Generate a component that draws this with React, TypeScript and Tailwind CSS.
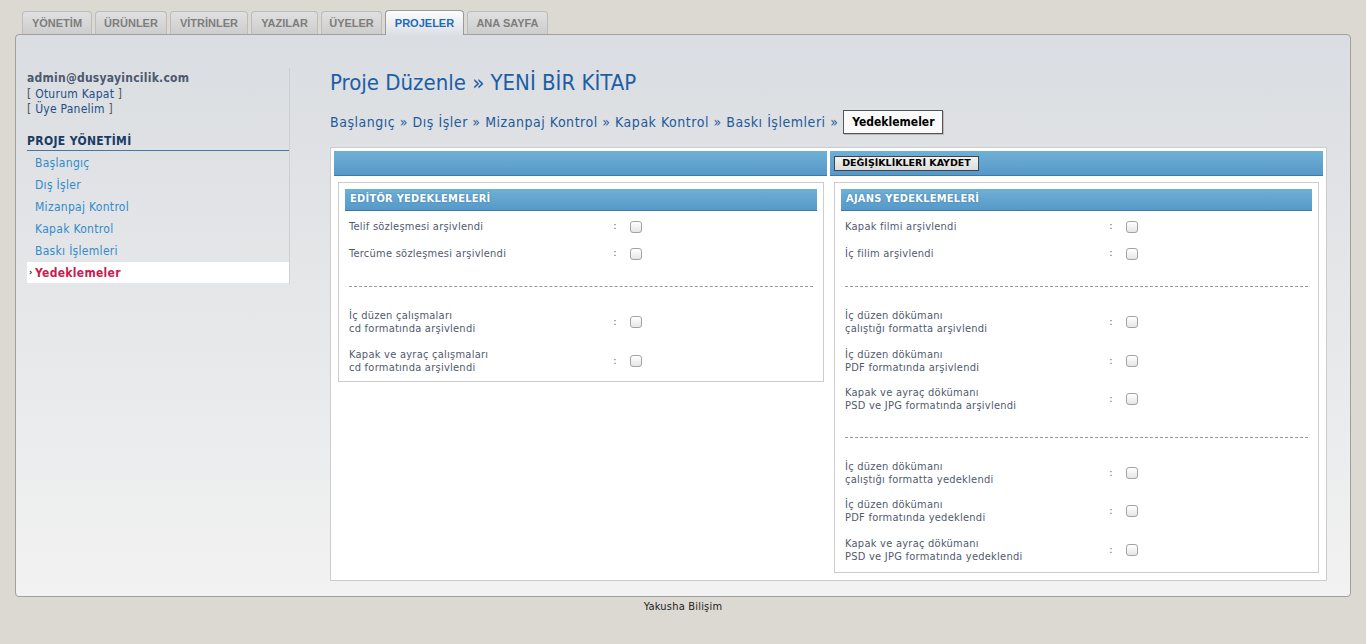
import React from "react";

const tabs = [
  { t: "YÖNETİM", w: "w-[70px]" },
  { t: "ÜRÜNLER", w: "w-[72px]" },
  { t: "VİTRİNLER", w: "w-[78px]" },
  { t: "YAZILAR", w: "w-[67px]" },
  { t: "ÜYELER", w: "w-[61px]" },
  { t: "PROJELER", w: "w-[79px]", active: true },
  { t: "ANA SAYFA", w: "w-[81px]" },
];

const menu = ["Başlangıç", "Dış İşler", "Mizanpaj Kontrol", "Kapak Kontrol", "Baskı İşlemleri"];

function Check() {
  return (
    <span className="inline-block w-[12px] h-[12px] rounded-[3px] border border-[#a3a3a3] bg-gradient-to-b from-white to-[#e6e6e6]" />
  );
}

function Row({ a, b }: { a: string; b?: string }) {
  return (
    <div className={`flex items-center ${b ? "h-[38.5px]" : "h-[27px]"}`}>
      <div className="w-[267px] pl-[4px] leading-[13px] tracking-[0.25px]">
        <div>{a}</div>
        {b && <div>{b}</div>}
      </div>
      <span className="w-[6px] text-center text-[#666]">:</span>
      <span className="ml-[12px] flex"><Check /></span>
    </div>
  );
}

function Dash({ top }: { top: string }) {
  return (
    <div className={`${top} pb-[16px] px-[4px]`}>
      <div className="border-t border-dashed border-[#9a9a9a]" />
    </div>
  );
}

function BoxHeader({ t }: { t: string }) {
  return (
    <div className="h-[22px] bg-gradient-to-b from-[#6fb0d6] to-[#5699c8] border-b border-[#3d7aa8] pl-[5px] flex items-center text-white font-bold text-[11px] tracking-[0.25px] [text-shadow:0_0_2px_#3b78a5]">
      {t}
    </div>
  );
}

export default function App() {
  return (
    <div className="min-h-[644px] bg-[#dcd9d2] [font-family:'DejaVu_Sans_Condensed','DejaVu_Sans',sans-serif] text-[11px] text-[#515a6e]">
      {/* tabs */}
      <div className="h-[34px] pt-[10px] pl-[22px] flex items-end gap-[3px] [font-family:'Liberation_Sans',Arial,sans-serif]">
        {tabs.map((x) =>
          x.active ? (
            <div
              key={x.t}
              className={`${x.w} h-[25px] -mb-[1px] relative z-10 rounded-t-[4px] border border-b-0 border-[#9a9a9a] bg-gradient-to-b from-[#fcfcfc] to-[#dde0e4] flex items-center justify-center font-bold text-[11px] text-[#1c6cb8]`}
            >
              {x.t}
            </div>
          ) : (
            <div
              key={x.t}
              className={`${x.w} h-[23px] rounded-t-[4px] border border-b-0 border-[#bcbcbc] bg-gradient-to-b from-[#e0e0e0] to-[#cdcdcd] flex items-center justify-center font-bold text-[11px] text-[#7d7d7d]`}
            >
              {x.t}
            </div>
          )
        )}
      </div>

      {/* main container */}
      <div className="mx-[15px] border border-[#a0a0a0] rounded-[4px] bg-gradient-to-b from-[#dadde1] to-[#f2f2f2] pt-[33px] pb-[15px] pl-[11px] pr-[23px] flex items-start">
        {/* sidebar */}
        <div className="w-[263px] border-r border-[#cfcfd2] pt-[2px] pb-[1px]">
          <div className="text-[12px] tracking-[0.25px]">
            <div className="h-[16px] leading-[16px] font-bold text-[#4d5870]">admin@dusyayincilik.com</div>
            <div className="h-[15px] leading-[15px] mt-[1px] text-[#555]">
              [ <span className="text-[#1f4e85]">Oturum Kapat</span> ]
            </div>
            <div className="h-[15px] leading-[15px] text-[#555]">
              [ <span className="text-[#1f4e85]">Üye Panelim</span> ]
            </div>
          </div>
          <div className="mt-[17px] border-b border-[#4477a3] pb-[2px] font-bold text-[12px] tracking-[0.35px] leading-[14px] text-[#1a3b66]">
            PROJE YÖNETİMİ
          </div>
          <div className="mt-[1px] text-[12px] tracking-[0.3px]">
            {menu.map((m) => (
              <div key={m} className="h-[22px] flex items-center pl-[8px] text-[#2f8ccb]">
                {m}
              </div>
            ))}
            <div className="h-[21px] bg-white flex items-center pl-[2px] font-bold text-[#c81d4c]">
              <span className="text-[9px] text-[#222] w-[6px] font-bold">›</span>
              Yedeklemeler
            </div>
          </div>
        </div>

        {/* main */}
        <div className="flex-1 ml-[40px]">
          <div className="h-[28px] flex items-center text-[22px] text-[#1b5ea6]">
            Proje Düzenle » YENİ BİR KİTAP
          </div>
          <div className="mt-[14px] flex items-center text-[14px] tracking-[0.53px] text-[#1d5a9a]">
            <span>Başlangıç » Dış İşler » Mizanpaj Kontrol » Kapak Kontrol » Baskı İşlemleri »</span>
            <span className="ml-[5px] w-[100px] h-[24px] flex items-center justify-center bg-[#fafafa] border border-[#555] shadow-[1px_1px_0_#bbb] font-bold text-[12px] tracking-normal text-black">
              Yedeklemeler
            </span>
          </div>

          {/* panel */}
          <div className="mt-[13px] bg-white border border-[#cccccc] p-[3px] grid grid-cols-2 gap-[3px]">
            {/* left */}
            <div className="pb-[4px]">
              <div className="h-[25px] bg-gradient-to-b from-[#6fb0d6] to-[#5699c8] border-b border-[#3d7aa8]" />
              <div className="mt-[6px] ml-[4px] mr-[3px] border border-[#cccccc] p-[6px] pb-[1px]">
                <BoxHeader t="EDİTÖR YEDEKLEMELERİ" />
                <div className="mt-[2px]">
                  <Row a="Telif sözleşmesi arşivlendi" />
                  <Row a="Tercüme sözleşmesi arşivlendi" />
                </div>
                <Dash top="pt-[19px]" />
                <Row a="İç düzen çalışmaları" b="cd formatında arşivlendi" />
                <Row a="Kapak ve ayraç çalışmaları" b="cd formatında arşivlendi" />
              </div>
            </div>
            {/* right */}
            <div className="pb-[4px]">
              <div className="h-[25px] bg-gradient-to-b from-[#6fb0d6] to-[#5699c8] border-b border-[#3d7aa8] flex items-center pl-[4px]">
                <span className="h-[15px] w-[145px] flex items-center justify-center bg-gradient-to-b from-[#f4f4f4] to-[#dcdcdc] border border-[#444] font-bold text-[9.5px] text-black [font-family:'DejaVu_Sans','Liberation_Sans',sans-serif]">
                  DEĞİŞİKLİKLERİ KAYDET
                </span>
              </div>
              <div className="mt-[6px] ml-[4px] mr-[4px] border border-[#cccccc] p-[6px] pb-[3px]">
                <BoxHeader t="AJANS YEDEKLEMELERİ" />
                <div className="mt-[2px]">
                  <Row a="Kapak filmi arşivlendi" />
                  <Row a="İç filim arşivlendi" />
                </div>
                <Dash top="pt-[19px]" />
                <Row a="İç düzen dökümanı" b="çalıştığı formatta arşivlendi" />
                <Row a="İç düzen dökümanı" b="PDF formatında arşivlendi" />
                <Row a="Kapak ve ayraç dökümanı" b="PSD ve JPG formatında arşivlendi" />
                <Dash top="pt-[18px]" />
                <Row a="İç düzen dökümanı" b="çalıştığı formatta yedeklendi" />
                <Row a="İç düzen dökümanı" b="PDF formatında yedeklendi" />
                <Row a="Kapak ve ayraç dökümanı" b="PSD ve JPG formatında yedeklendi" />
              </div>
            </div>
          </div>
        </div>
      </div>

      <div className="text-center text-[11px] tracking-[0.2px] text-[#222] mt-[3px] leading-[14px]">Yakusha Bilişim</div>
    </div>
  );
}
